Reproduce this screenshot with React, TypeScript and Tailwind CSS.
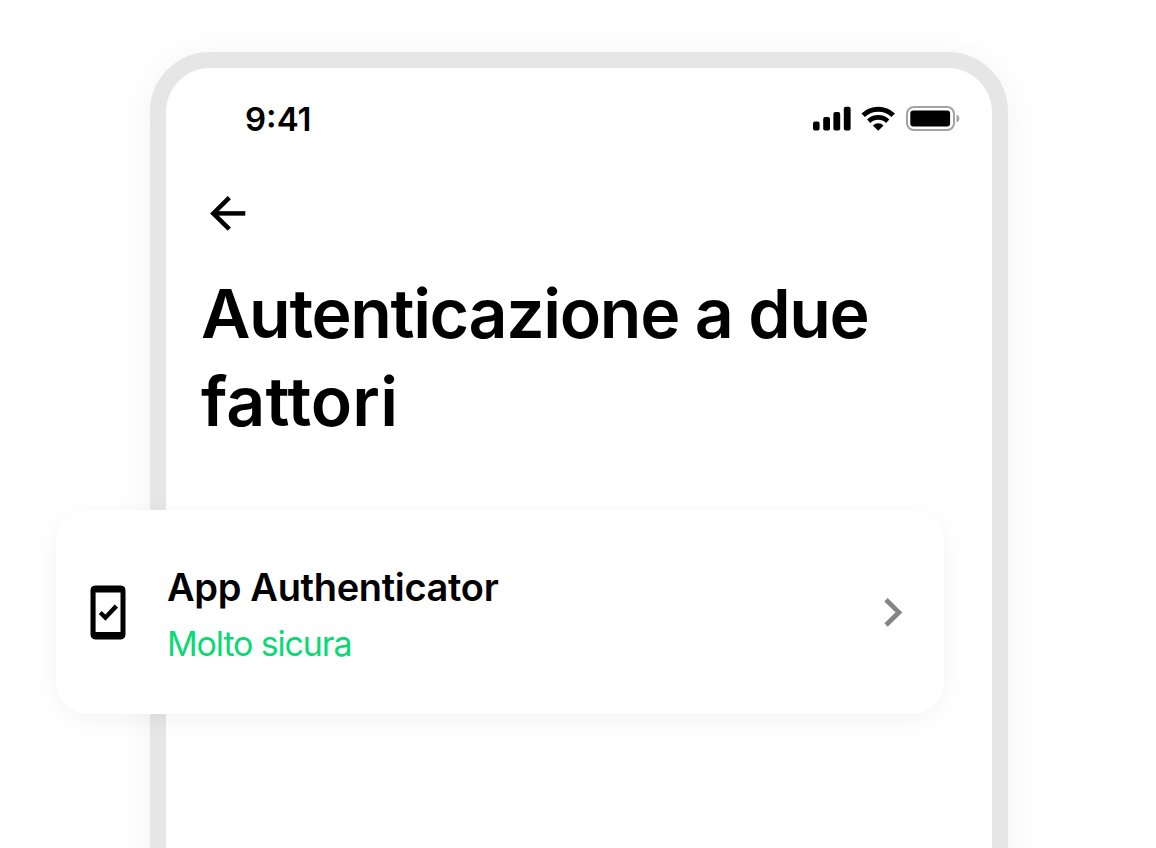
import React from 'react';

const SignalIcon: React.FC = () => (
  <svg width="38" height="26" viewBox="0 0 38 26" fill="black">
    <rect x="0" y="15.4" width="6.6" height="9.2" rx="2" />
    <rect x="10.2" y="11" width="6.8" height="13.6" rx="2" />
    <rect x="20.4" y="6" width="6.8" height="18.6" rx="2" />
    <rect x="30.8" y="0.800" width="6.8" height="23.8" rx="2" />
  </svg>
);

const WifiIcon: React.FC = () => (
  <svg width="36" height="26" viewBox="0 0 36 26" fill="none" stroke="black">
    <path d="M2.2 9.2A21.8 21.8 0 0 1 32.2 9.200" strokeWidth="5" />
    <path d="M7.700 15.200A13.8 13.8 0 0 1 26.7 15.200" strokeWidth="4.8" />
    <path d="M17.2 24.800L11.8 19.400A7.600 7.600 0 0 1 22.600 19.400Z" fill="black" stroke="none" />
  </svg>
);

const BatteryIcon: React.FC = () => (
  <svg width="54" height="26" viewBox="0 0 54 26">
    <rect x="1" y="1" width="47" height="23" rx="6.8" fill="none" stroke="#a3a3a3" strokeWidth="2" />
    <rect x="4.3" y="4.600" width="39.8" height="16" rx="3" fill="black" />
    <path d="M50.500 8.500v8c1.800-.7 2.900-2.200 2.900-4s-1.100-3.300-2.900-4Z" fill="#a3a3a3" />
  </svg>
);

const BackIcon: React.FC = () => (
  <svg width="36" height="36" viewBox="0 0 36 36" fill="none" stroke="black" strokeWidth="4.5">
    <path d="M35.3 17.400H4" />
    <path d="M19.3 1.700L3.3 17.400L19.3 33.200" />
  </svg>
);

const PhoneCheckIcon: React.FC = () => (
  <svg width="36" height="56" viewBox="0 0 36 56">
    <path
      fillRule="evenodd"
      d="M5.2 .4H30.8A5 5 0 0 1 35.5 5.2V49.6A5 5 0 0 1 30.8 54.4H5.2A5 5 0 0 1 .5 49.6V5.2A5 5 0 0 1 5.2 .4ZM5.6 7.500V47H30.500V7.500Z"
    />
    <path d="M8.800 29L11.600 26L15.400 29.400L24.700 19.400L28.100 22.500L15.400 35.800Z" />
  </svg>
);

const ChevronIcon: React.FC = () => (
  <svg width="20" height="30" viewBox="0 0 20 30" fill="none" stroke="#858585" strokeWidth="4.8">
    <path d="M2 1.800L14.900 14.400L2 27" />
  </svg>
);

interface MethodCardProps {
  title: string;
  subtitle: string;
}

const MethodCard: React.FC<MethodCardProps> = ({ title, subtitle }) => (
  <div className="relative mt-[65px] -ml-[110px] flex h-[204px] w-[888px] rounded-[32px] bg-white shadow-[0_6px_24px_rgba(0,0,0,0.05)]">
    <div className="mt-[75px] ml-[34px] w-[77px]">
      <PhoneCheckIcon />
    </div>
    <div className="flex-1 pt-[53px]">
      <h2 className="mb-[13px] text-[38px] leading-[48px] font-semibold tracking-[-0.33px] whitespace-nowrap">{title}</h2>
      <p className="text-[34px] leading-[40px] tracking-[-1.15px] whitespace-nowrap text-[#0bd976]">{subtitle}</p>
    </div>
    <div className="mt-[88px] mr-[40px]">
      <ChevronIcon />
    </div>
  </div>
);

export default function App() {
  return (
    <div className="h-[848px] overflow-hidden bg-white pt-[52px] pl-[150px] font-['Inter',sans-serif] text-black">
      <div className="h-[900px] w-[858px] rounded-t-[60px] border-[16px] border-[#e6e6e6] bg-white shadow-[0_4px_40px_rgba(0,0,0,0.05)]">
        <div className="flex items-start justify-between pt-[31px] pr-[32px] pl-[79px]">
          <span className="text-[33px] leading-[40px] font-semibold tracking-[0px]">9:41</span>
          <div className="flex pt-[7px]">
            <SignalIcon />
            <span className="ml-[10px]">
              <WifiIcon />
            </span>
            <span className="ml-[9px]">
              <BatteryIcon />
            </span>
          </div>
        </div>
        <div className="mt-[57px] ml-[44px] h-9">
          <BackIcon />
        </div>
        <h1 className="mt-[37px] ml-[35px] text-[68px] leading-[88px] font-semibold whitespace-nowrap">
          <span className="block tracking-[-1.35px]">Autenticazione a due</span>
          <span className="block tracking-[0.1px]">fattori</span>
        </h1>
        <MethodCard title="App Authenticator" subtitle="Molto sicura" />
      </div>
    </div>
  );
}
